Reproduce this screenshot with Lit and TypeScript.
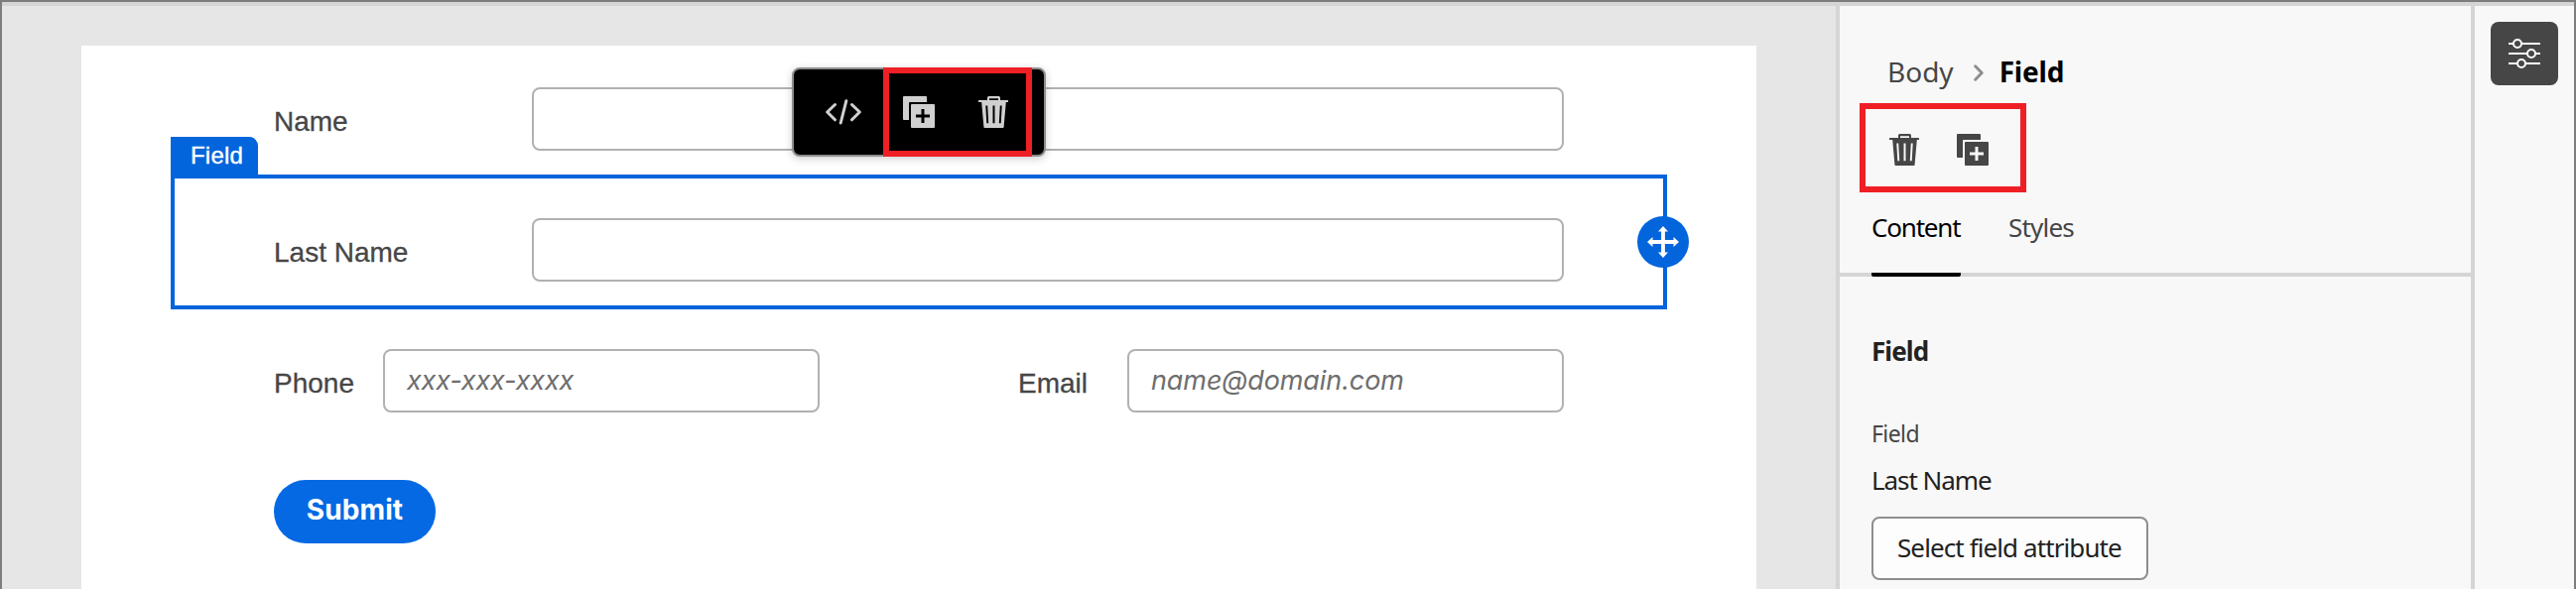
import { LitElement, html, css, svg } from "lit";

const duplicateShape = svg`
  <path d="M1 0H23a1 1 0 0 1 1 1V6H7a1 1 0 0 0-1 1V24H1a1 1 0 0 1-1-1V1a1 1 0 0 1 1-1Z"/>
  <path fill-rule="evenodd" d="M9 8H31a1 1 0 0 1 1 1V31a1 1 0 0 1-1 1H9a1 1 0 0 1-1-1V9a1 1 0 0 1 1-1ZM18.500 13V18.500H13V21.500H18.500V27H21.500V21.500H27V18.500H21.500V13Z"/>`;

const trashShape = svg`
  <path fill-rule="evenodd" d="M9 4V1.5A1.5 1.5 0 0 1 10.500 0H20.500A1.500 1.500 0 0 1 22 1.500V4H29.500a.5.5 0 0 1 .5.5V6H27.800L25.600 31a1 1 0 0 1-1 1H6.400a1 1 0 0 1-1-1L3.200 6H.5A.5.5 0 0 1 0 5.500V4.500A.5.5 0 0 1 .5 4ZM11 4H20V2.200H11ZM7.300 9.500L8.300 27.200H10.200L9.200 9.500ZM14.500 9.500V27.200H16.500V9.500ZM21.800 9.500L20.800 27.200H22.700L23.700 9.500Z"/>`;

class EditorIcon extends LitElement {
  static properties = { name: {} };
  declare name: string;

  static styles = css`
    :host { display: block; flex: none; }
    svg { display: block; fill: currentColor; }
    .line { fill: none; stroke: currentColor; stroke-width: 2; }
    .code, .chevron { fill: none; stroke: currentColor; stroke-width: 3; stroke-linecap: round; stroke-linejoin: round; }
  `;

  render() {
    switch (this.name) {
      case "duplicate":
        return html`<svg width="32" height="32" viewBox="0 0 32 32">${duplicateShape}</svg>`;
      case "trash":
        return html`<svg width="30" height="32" viewBox="0 0 30 32">${trashShape}</svg>`;
      case "code":
        return html`<svg width="36" height="26" viewBox="0 0 36 26">
          <path class="code" d="M9.500 5.500L1.700 13L9.500 20.800M26.500 5.500L34.300 13L26.500 20.800M20.800 1.800L15.200 24"/></svg>`;
      case "chevron":
        return html`<svg width="10" height="17" viewBox="0 0 10 17">
          <path class="chevron" d="M1.700 1.800L8.200 8.500L1.700 15.200"/></svg>`;
      case "move":
        return html`<svg width="32" height="32" viewBox="0 0 32 32">
          <path d="M16 0L21 5.500H17.900V14.100H26.500V11L32 16L26.500 21V17.900H17.900V26.500H21L16 32L11 26.500H14.100V17.900H5.500V21L0 16L5.500 11V14.100H14.100V5.500H11Z"/></svg>`;
      default:
        return html`<svg width="32" height="30" viewBox="0 0 32 30">
          <path class="line" d="M0 5H5M13 5H32M0 15H19M27 15H32M0 25H9M17 25H32"/>
          <circle class="line" cx="9" cy="5" r="4"/>
          <circle class="line" cx="23" cy="15" r="4"/>
          <circle class="line" cx="13" cy="25" r="4"/></svg>`;
    }
  }
}
customElements.define("editor-icon", EditorIcon);

class AppRoot extends LitElement {
  static styles = css`
    :host {
      display: flex;
      box-sizing: border-box;
      width: 100%;
      height: 594px;
      overflow: hidden;
      border: 2px solid #7d7d7d;
      border-bottom: 0;
      background: #d5d5d5;
      padding-top: 4px;
      gap: 4px;
      white-space: nowrap;
      font-family: "Noto Sans", sans-serif;
    }
    .canvas { flex: none; width: 1848px; box-sizing: border-box; padding: 40px 80px 0; background: #e6e6e6; display: flex; }
    .paper {
      flex: 1; box-sizing: border-box; padding: 42px 194px 0; background: #fff;
      display: flex; flex-direction: column; gap: 68px;
      font-family: "Liberation Sans", Arial, sans-serif;
    }
    .row { position: relative; display: flex; height: 64px; }
    .label { box-sizing: border-box; padding-top: 19px; font-size: 28px; line-height: 32px; color: #464646; flex: none; -webkit-text-stroke: .3px #464646; }
    .wide { width: 260px; }
    .narrow { width: 110px; }
    .input {
      flex: 1; box-sizing: border-box; border: 2px solid #b1b1b1; border-radius: 8px; background: #fff;
      padding: 0 22px; font: italic 27px/59px Inter, sans-serif; color: #6e6e6e;
    }
    .phone { letter-spacing: -.15px; }
    .email { letter-spacing: -.1px; }
    .pair { display: grid; grid-template-columns: 550px 550px; column-gap: 200px; }
    .half { display: flex; }
    .submit {
      width: 163px; height: 64px; border-radius: 32px; background: #0469e3; color: #fff;
      font: 700 28px/61px Inter, sans-serif; letter-spacing: .1px; text-align: center;
    }
    .selection {
      position: absolute; left: -104px; top: -44px; width: 1508px; height: 136px;
      box-sizing: border-box; border: 4px solid #0265dc;
    }
    .tag {
      position: absolute; left: -4px; top: -42px; width: 88px; height: 42px; box-sizing: border-box;
      padding-left: 20px; border-top-right-radius: 9px; background: #0265dc; color: #fff;
      font-size: 24px; line-height: 37px; letter-spacing: .2px; -webkit-text-stroke: .4px #fff;
    }
    .handle {
      position: absolute; right: -26px; top: 38px; width: 52px; height: 52px; border-radius: 50%;
      background: #0265dc; color: #fff; display: grid; place-items: center;
    }
    .toolbar {
      position: absolute; z-index: 2; left: 522px; top: -20px; width: 256px; height: 90px; box-sizing: border-box;
      border: 2px solid #8e8e8e; border-radius: 8px; background: #000; color: #d0d0d0;
      display: flex; align-items: center; padding-left: 32px; box-shadow: 0 2px 8px rgba(0,0,0,.2);
    }
    .toolbar .dup { margin-left: 42px; }
    .toolbar .bin { margin-left: 44px; }
    .mark { position: absolute; left: 90px; top: -2px; width: 150px; height: 90px; box-sizing: border-box; border: 6px solid #ef1f26; }
    .panel { width: 636px; flex: none; background: #f8f8f8; display: flex; flex-direction: column; }
    .crumbs { display: flex; padding: 46px 0 0 48px; font-size: 28px; line-height: 40px; color: #464646; }
    .crumbs editor-icon { margin: 13px 0 0 20px; color: #8e8e8e; }
    .here { font-weight: 700; color: #000; margin-left: 16px; letter-spacing: -.2px; }
    .actions {
      margin: 12px 0 0 20px; width: 168px; height: 90px; box-sizing: border-box; border: 6px solid #ef1f26;
      display: flex; gap: 38px; padding: 25px 0 0 24px; color: #464646;
    }
    .tabs { display: flex; height: 85px; box-sizing: border-box; padding-left: 32px; background: linear-gradient(#d5d5d5, #d5d5d5) bottom / 100% 4px no-repeat; }
    .tab { box-sizing: border-box; padding-top: 17px; font-size: 26px; line-height: 36px; color: #464646; letter-spacing: -.8px; }
    .active { width: 90px; margin-right: 48px; color: #000; letter-spacing: -1.2px; background: linear-gradient(#000, #000) bottom / 100% 4px no-repeat; border-radius: 0 0 2px 2px; }
    .body { padding: 57px 0 0 32px; color: #222; font-size: 26px; line-height: 36px; }
    .heading { font-weight: 700; letter-spacing: -.9px; }
    .caption { margin-top: 49px; font-size: 23px; line-height: 32px; letter-spacing: -.6px; color: #464646; }
    .value { margin-top: 13px; letter-spacing: -1.05px; }
    .button {
      margin-top: 19px; width: 279px; height: 64px; box-sizing: border-box; border: 2px solid #8e8e8e; border-radius: 8px;
      background: #fdfdfd; padding-left: 24px; line-height: 59px; letter-spacing: -.9px;
    }
    .rail { flex: 1; background: #f8f8f8; padding: 16px; }
    .settings { width: 68px; height: 64px; border-radius: 8px; background: #464646; color: #fff; display: grid; place-items: center; }
  `;

  render() {
    return html`
      <div class="canvas">
        <div class="paper">
          <div class="row">
            <div class="label wide">Name</div>
            <div class="input"></div>
            <div class="toolbar">
              <editor-icon name="code"></editor-icon>
              <editor-icon class="dup" name="duplicate"></editor-icon>
              <editor-icon class="bin" name="trash"></editor-icon>
              <div class="mark"></div>
            </div>
          </div>
          <div class="row">
            <div class="label wide">Last Name</div>
            <div class="input"></div>
            <div class="selection">
              <div class="tag">Field</div>
              <div class="handle"><editor-icon name="move"></editor-icon></div>
            </div>
          </div>
          <div class="row pair">
            <div class="half"><div class="label narrow">Phone</div><div class="input phone">xxx-xxx-xxxx</div></div>
            <div class="half"><div class="label narrow">Email</div><div class="input email">name@domain.com</div></div>
          </div>
          <div class="submit">Submit</div>
        </div>
      </div>
      <div class="panel">
        <div class="crumbs"><span>Body</span><editor-icon name="chevron"></editor-icon><span class="here">Field</span></div>
        <div class="actions"><editor-icon name="trash"></editor-icon><editor-icon name="duplicate"></editor-icon></div>
        <div class="tabs"><div class="tab active">Content</div><div class="tab">Styles</div></div>
        <div class="body">
          <div class="heading">Field</div>
          <div class="caption">Field</div>
          <div class="value">Last Name</div>
          <div class="button">Select field attribute</div>
        </div>
      </div>
      <div class="rail"><div class="settings"><editor-icon name="sliders"></editor-icon></div></div>
    `;
  }
}
customElements.define("app-root", AppRoot);
